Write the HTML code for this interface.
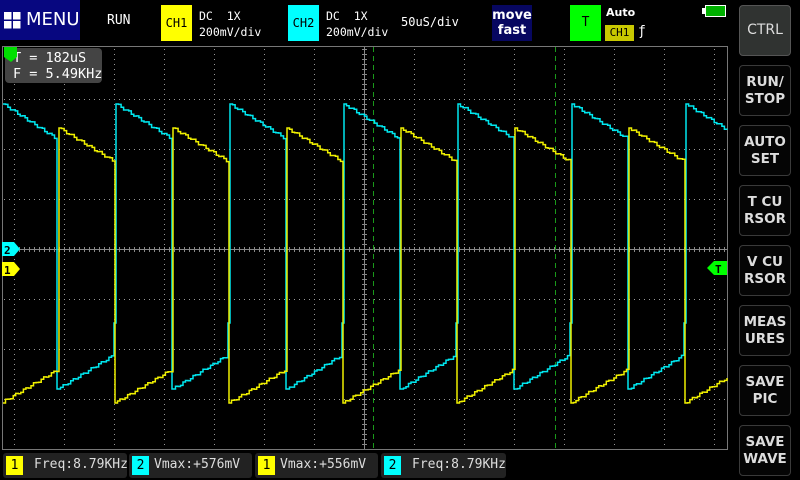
<!DOCTYPE html>
<html><head><meta charset="utf-8"><style>
*{margin:0;padding:0;box-sizing:border-box}
body{width:800px;height:480px;background:#000;position:relative;overflow:hidden;font-family:"DejaVu Sans Mono","Liberation Mono",monospace;color:#fff}
.a{position:absolute}
.btn{position:absolute;left:739px;width:52px;height:51px;border:1px solid #3a3a3a;border-radius:4px;background:#050505;color:#ddd;font:bold 13.5px "DejaVu Sans","Liberation Sans",sans-serif;text-align:center;display:flex;align-items:center;justify-content:center;line-height:17px}
.m{position:absolute;top:453px;height:25px;background:#222;border-radius:3px;font-size:13px;color:#ddd}
.m .n{position:absolute;left:3px;top:3px;width:17px;height:19px;color:#000;text-align:center;line-height:19px;font-size:13px}
.m .t{position:absolute;left:31px;top:4px;white-space:pre}
</style></head><body>
<div class="a" style="left:0;top:0;width:80px;height:40px;background:#070780"></div>
<svg class="a" style="left:4px;top:12px" width="17" height="17"><rect x="0" y="0" width="7.5" height="7.5" fill="#fff"/><rect x="9" y="0" width="7.5" height="7.5" fill="#fff"/><rect x="0" y="9" width="7.5" height="7.5" fill="#fff"/><rect x="9" y="9" width="7.5" height="7.5" fill="#fff"/></svg>
<div class="a" style="left:26px;top:9px;font:18px 'DejaVu Sans',sans-serif">MENU</div>
<div class="a" style="left:107px;top:13px;font-size:13px">RUN</div>
<div class="a" style="left:161px;top:5px;width:31px;height:36px;background:#ffff00;color:#000;font-size:12px;line-height:36px;text-align:center">CH1</div>
<div class="a" style="left:199px;top:8px;font-size:11.5px;line-height:16px;white-space:pre">DC  1X
200mV/div</div>
<div class="a" style="left:288px;top:5px;width:31px;height:36px;background:#00ffff;color:#000;font-size:12px;line-height:36px;text-align:center">CH2</div>
<div class="a" style="left:326px;top:8px;font-size:11.5px;line-height:16px;white-space:pre">DC  1X
200mV/div</div>
<div class="a" style="left:401px;top:15px;font-size:12px">50uS/div</div>
<div class="a" style="left:492px;top:5px;width:40px;height:36px;background:#070760;font:bold 13px 'DejaVu Sans',sans-serif;line-height:15px;text-align:center;padding-top:3px">move<br>fast</div>
<div class="a" style="left:570px;top:5px;width:31px;height:36px;background:#00ff00;color:#000;font-size:13px;line-height:36px;text-align:center">T</div>
<div class="a" style="left:606px;top:6px;font:bold 11px 'DejaVu Sans',sans-serif">Auto</div>
<div class="a" style="left:605px;top:25px;width:29px;height:16px;background:#c8c800;color:#000;font-size:11px;line-height:16px;text-align:center">CH1</div>
<div class="a" style="left:638px;top:24px;font-size:13px">ƒ</div>
<div class="a" style="left:705px;top:5px;width:21px;height:12px;border:1px solid #fff;background:#00b000"></div>
<div class="a" style="left:702px;top:8px;width:3px;height:6px;background:#fff"></div>

<div class="btn" style="top:5px;background:#303331;border-color:#555;font-weight:normal;font-size:14px">CTRL</div>
<div class="btn" style="top:65px">RUN/<br>STOP</div>
<div class="btn" style="top:125px">AUTO<br>SET</div>
<div class="btn" style="top:185px">T CU<br>RSOR</div>
<div class="btn" style="top:245px">V CU<br>RSOR</div>
<div class="btn" style="top:305px">MEAS<br>URES</div>
<div class="btn" style="top:365px">SAVE<br>PIC</div>
<div class="btn" style="top:425px">SAVE<br>WAVE</div>

<svg class="a" style="left:0;top:0" width="800" height="480">
<g stroke="#999" stroke-width="1" stroke-dasharray="1,4" fill="none">
<path d="M14.5 49V449M64.5 49V449M114.5 49V449M164.5 49V449M214.5 49V449M264.5 49V449M314.5 49V449M414.5 49V449M464.5 49V449M514.5 49V449M564.5 49V449M614.5 49V449M664.5 49V449M714.5 49V449"/>
<path d="M4 99.5H727M4 149.5H727M4 199.5H727M4 299.5H727M4 349.5H727M4 399.5H727M4 449.5H727"/>
</g>
<path d="M4 249.5H727M364.5 47V449" stroke="#888" stroke-width="1"/>
<path d="M4 249.5H727" stroke="#888" stroke-width="5" stroke-dasharray="1,4" fill="none"/>
<path d="M364.5 49V449" stroke="#888" stroke-width="5" stroke-dasharray="1,4" fill="none"/>
<path d="M373.5 47V449M555.5 47V449" stroke="#1a9a1a" stroke-width="1" stroke-dasharray="5,4"/>
<rect x="2.5" y="46.5" width="725" height="403" fill="none" stroke="#777"/>
<path id="cy" fill="none" stroke="#00e8f0" stroke-width="1.5"/>
<path id="ye" fill="none" stroke="#f0f000" stroke-width="1.5"/>
<path d="M2 242H14L20 249L14 256H2Z" fill="#00ffff"/><text x="4" y="254" font-size="11" font-weight="bold" fill="#000" font-family="DejaVu Sans Mono">2</text>
<path d="M2 262H14L20 269L14 276H2Z" fill="#ffff00"/><text x="4" y="274" font-size="11" font-weight="bold" fill="#000" font-family="DejaVu Sans Mono">1</text>
<path d="M727 261H714L707 268L714 275H727Z" fill="#00ff00"/><text x="715" y="273" font-size="11" font-weight="bold" fill="#000" font-family="DejaVu Sans Mono">T</text>
</svg>
<div class="a" style="left:5px;top:48px;width:97px;height:35px;background:#444;border-radius:4px;font-size:13.5px;line-height:16px;padding:2px 0 0 8px;white-space:pre">T = 182uS
F = 5.49KHz</div>
<svg class="a" style="left:4px;top:47px" width="14" height="16"><path d="M0 0H13V10L7 15L0 10Z" fill="#00e000"/></svg>

<div class="m" style="left:3px;width:124px"><div class="n" style="background:#ffff00">1</div><div class="t">Freq:8.79KHz</div></div>
<div class="m" style="left:129px;width:123px"><div class="n" style="background:#00ffff">2</div><div class="t" style="left:25px">Vmax:+576mV</div></div>
<div class="m" style="left:255px;width:123px"><div class="n" style="background:#ffff00">1</div><div class="t" style="left:25px">Vmax:+556mV</div></div>
<div class="m" style="left:381px;width:125px"><div class="n" style="background:#00ffff">2</div><div class="t">Freq:8.79KHz</div></div>
<script>
function seg(x0,y0,x1,y1){var d='';var n=Math.max(1,Math.round((x1-x0)/2.5));for(var i=1;i<=n;i++){var x=x0+(x1-x0)*i/n,y=y0+(y1-y0)*i/n+Math.sin(i*1.7+x0)*1.2;if(i==n)y=y1;d+='H'+x.toFixed(1)+'V'+y.toFixed(1);}return d;}
var c='M3 104'+seg(3,104,57,139)+'V389'+seg(58,389,114,355)+'V323';
for(var k=1;k<7;k++){var s=2+114*k;c+='L'+s+' 323V104';if(s+56<727){c+=seg(s,104,s+56,139)+'V389'+seg(s+57,389,s+112,355)+'V323';}else{c+=seg(s,104,727,104+35*(727-s)/56);}}
document.getElementById('cy').setAttribute('d',c);
var y='M3 403';var t0=3,y0=402;
for(var k=0;k<6;k++){var t=59+114*k;y+=seg(t0,y0,t,369)+'V128'+seg(t,128,t+56,162)+'V403';t0=t+56;y0=403;}
y+=seg(t0,403,727,378);
document.getElementById('ye').setAttribute('d',y);
</script>
</body></html>
